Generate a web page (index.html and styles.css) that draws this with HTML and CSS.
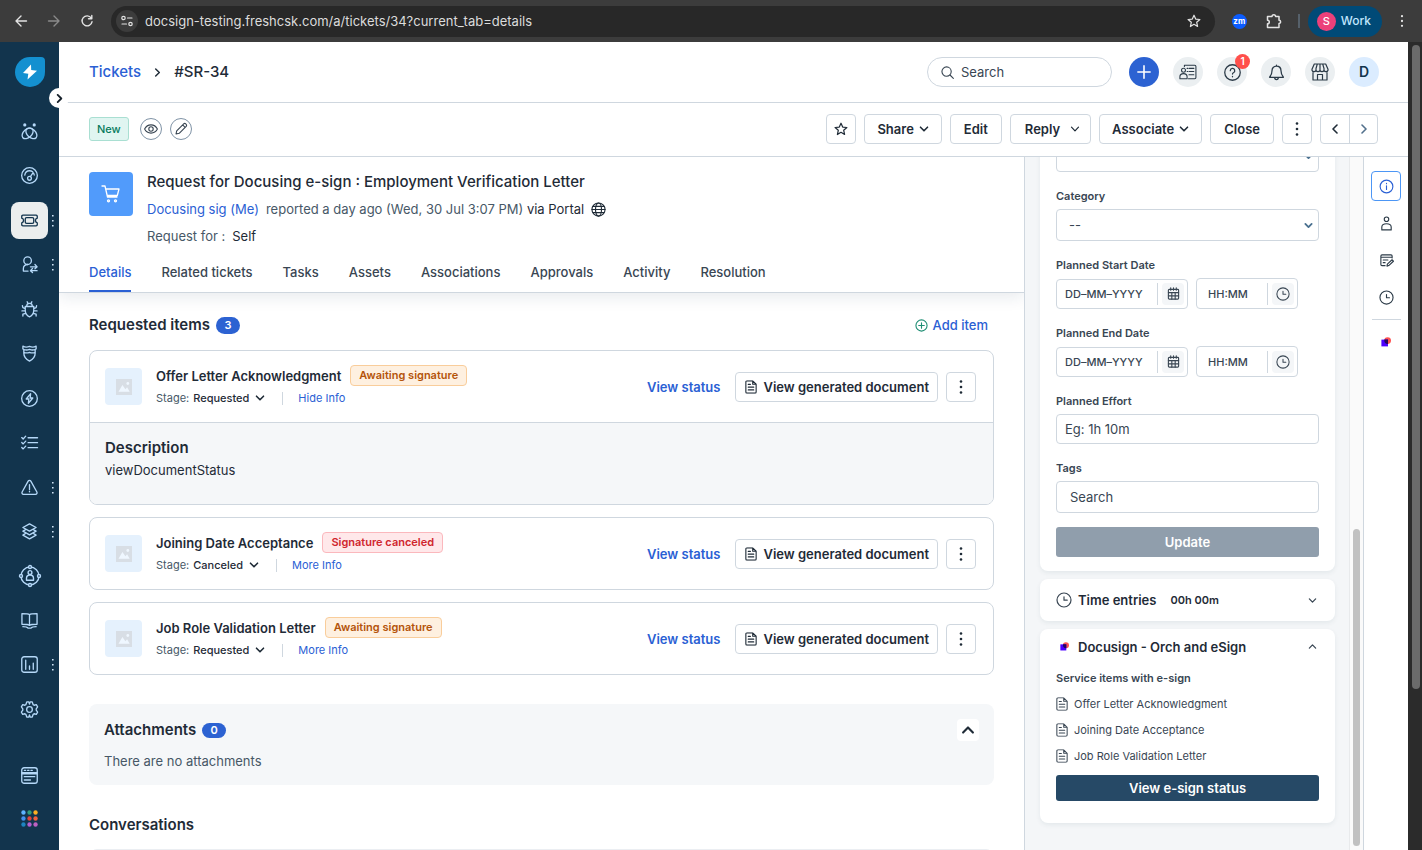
FILE: index.html
```html
<!DOCTYPE html>
<html lang="en">
<head>
<meta charset="utf-8">
<title>#SR-34 Request for Docusing e-sign</title>
<meta name="viewport" content="width=device-width, initial-scale=1">
<link rel="stylesheet" href="styles.css">
</head>
<body>
<svg class="sprite" aria-hidden="true">
  <symbol id="chev-down" viewBox="0 0 10 10"><path d="M1.500 3.200 5 6.800l3.500-3.600"/></symbol>
  <symbol id="chev-up" viewBox="0 0 10 10"><path d="M1.500 6.800 5 3.200l3.500 3.600"/></symbol>
  <symbol id="chev-right" viewBox="0 0 10 10"><path d="M3 1l4 4-4 4"/></symbol>
  <symbol id="chev-left" viewBox="0 0 10 10"><path d="M7 1 3 5l4 4"/></symbol>
  <symbol id="dots" viewBox="0 0 4 16"><g fill="currentColor" stroke="none"><circle cx="2" cy="2.500" r="1.300"/><circle cx="2" cy="8" r="1.300"/><circle cx="2" cy="13.500" r="1.300"/></g></symbol>
  <symbol id="nav-dots" viewBox="0 0 2 12"><path d="M0 0h1.600v1.600H0zM0 5h1.600v1.600H0zM0 10h1.600v1.600H0z" fill="currentColor" stroke="none"/></symbol>
  <symbol id="clock" viewBox="0 0 16 16"><circle cx="8" cy="8" r="7"/><path d="M8 4.800V8.200h3.200"/></symbol>
  <symbol id="calendar" viewBox="0 0 14 14"><rect x="1.500" y="2.500" width="11" height="10.500" rx="1"/><path d="M1.500 6h11M1.500 9.500h11M5.200 6v7M8.800 6v7M4 .8v2.600M7 .8v2.600M10 .8v2.600"/></symbol>
  <symbol id="doc" viewBox="0 0 14 16"><path d="M9 .8H2.500A1.500 1.500 0 0 0 1 2.300v11.400a1.500 1.500 0 0 0 1.500 1.500h9a1.500 1.500 0 0 0 1.500-1.500V4.800zM9 .8v4h4M3.800 5h2.500M3.800 8.200h6.400M3.800 11.400h6.400"/></symbol>
  <symbol id="picture" viewBox="0 0 16 16"><rect width="16" height="16" fill="#d8dee5"/><path d="M2.500 12.800 6.400 6l3 4.200 1.700-2 2.600 4.600z" fill="#eff7ff"/><circle cx="11.800" cy="4.500" r="1.400" fill="#eff7ff"/></symbol>
  <symbol id="docusign" viewBox="0 0 10 10"><circle cx="6.600" cy="3.600" r="3.400" fill="#ff5252"/><rect x=".4" y="2.600" width="6.600" height="6.800" fill="#4c00ff"/><path d="M3.400 2.600H7v4.380A3.400 3.400 0 0 1 3.400 2.600z" fill="#26065d"/></symbol>
</svg>

<header class="browser">
  <button class="b-btn" aria-label="Back"><svg viewBox="0 0 12 12"><path d="M11.500 6H1M6 1 1 6l5 5"/></svg></button>
  <button class="b-btn dim" aria-label="Forward"><svg viewBox="0 0 12 12"><path d="M.5 6H11M6 1l5 5-5 5"/></svg></button>
  <button class="b-btn" aria-label="Reload"><svg viewBox="0 0 12 12"><path d="M10.200 3A5 5 0 1 0 11 6.800M10.800.5v3.300H7.500"/></svg></button>
  <div class="omnibox">
    <button class="site-info" aria-label="Site information"><svg viewBox="0 0 12 12"><circle cx="2.500" cy="3" r="1.700"/><path d="M6.500 3H11M1 9h4.500"/><circle cx="9.500" cy="9" r="1.700"/></svg></button>
    <input class="url" aria-label="Address" value="docsign-testing.freshcsk.com/a/tickets/34?current_tab=details">
    <button class="b-btn" aria-label="Bookmark"><svg class="star" viewBox="0 0 14 14"><path d="m7 1.200 1.700 3.900 4.200.4-3.200 2.800.9 4.200L7 10.300l-3.600 2.200.9-4.200L1.100 5.500l4.200-.4z"/></svg></button>
  </div>
  <span class="zm">zm</span>
  <button class="b-btn ext" aria-label="Extensions"><svg viewBox="0 0 16 16"><path d="M1.500 3.500H6a1.800 1.800 0 0 1 3.600 0h3.400v3.700a1.600 1.600 0 0 1 0 3.200v4.100H1.500v-3.700a1.800 1.800 0 0 0 0-3.600z"/></svg></button>
  <span class="b-sep"></span>
  <button class="profile"><span class="avatar">S</span>Work</button>
  <button class="b-btn menu" aria-label="Menu"><svg viewBox="0 0 4 16"><use href="#dots"/></svg></button>
</header>

<div class="app">
  <aside class="sidebar">
    <a class="logo" href="#" aria-label="Home"><svg viewBox="0 0 16 16"><path d="M9 .5 1 9l5.300.7L5.500 15.500 15 6.700l-5.800-.8z"/></svg></a>
    <button class="expand" aria-label="Expand navigation"><svg viewBox="0 0 10 10"><use href="#chev-right"/></svg></button>
    <nav class="nav">
      <a href="#" aria-label="Freddy"><svg viewBox="0 0 18 18"><g fill="currentColor" stroke="none"><circle cx="4" cy="2" r="1.700"/><circle cx="14" cy="2" r="1.700"/></g><ellipse cx="7" cy="11" rx="6.800" ry="4.400" transform="rotate(-42 7 11)"/><ellipse cx="11" cy="11" rx="6.800" ry="4.400" transform="rotate(42 11 11)"/></svg></a>
      <a href="#" aria-label="Dashboard"><svg viewBox="0 0 18 18"><circle cx="9" cy="9" r="8.300"/><path d="M4 8.500C4.500 5.500 6.500 4 9 4c1.500 0 2.500.4 3.400 1M14 8.500c-.1-.8-.3-1.300-.6-1.800M10 10.300 12.800 6"/><circle cx="9" cy="12" r="2"/></svg></a>
      <a href="#" class="active" aria-label="Tickets"><svg viewBox="0 0 18 14"><path d="M.8 2.500c0-.8.500-1.200 1.200-1.200h14c.7 0 1.200.4 1.200 1.200v2a2.600 2.600 0 0 0 0 5v2c0 .8-.5 1.200-1.200 1.200H2c-.7 0-1.200-.4-1.200-1.200v-2a2.600 2.600 0 0 0 0-5z"/><rect x="4.500" y="4" width="9" height="6" rx="1.500"/></svg><svg class="more" viewBox="0 0 2 12"><use href="#nav-dots"/></svg></a>
      <a href="#" aria-label="Requesters"><svg viewBox="0 0 18 18"><circle cx="7" cy="5" r="4"/><path d="M7.500 16H2.500v-2.500C2.500 10.600 4.500 9 7 9M10 11.500h7M14.800 9l2.300 2.500-2.300 2M17 15.500h-7M12.200 13.200 10 15.500l2.200 2"/></svg><svg class="more" viewBox="0 0 2 12"><use href="#nav-dots"/></svg></a>
      <a href="#" aria-label="Problems"><svg viewBox="0 0 18 18"><path d="M6 5.500C6 3.500 7.200 2.500 9 2.500s3 1 3 3M4.500 5.800h9v4c0 3-1.500 5.500-4.500 7-3-1.500-4.500-4-4.500-7zM6.500.8l1 2M11.500.8l-1 2M4.500 8 2 7 1.500 5M4.500 10.500H1M5 13l-3 .8V16M13.500 8 16 7l.5-2M13.500 10.500H17M13 13l3 .8V16"/></svg></a>
      <a href="#" aria-label="Changes"><svg viewBox="0 0 18 18"><path d="M2 1.200c2 1.200 4.500 1.400 7 .3 2.500 1.100 5 .9 7-.3v3c-2 1.200-4.500 1.400-7 .4-2.500 1-5 .8-7-.4zM3 5v3.800c0 3.500 2.500 6.500 6 8.200 3.500-1.700 6-4.700 6-8.200V5M3 7.800c2 .8 4 .8 6 0 2 .8 4 .8 6 0"/></svg></a>
      <a href="#" aria-label="Releases"><svg viewBox="0 0 18 18"><circle cx="9" cy="9" r="8.300"/><path d="M10.200 4 5.500 9.500h2.800L7.800 14l4.700-5.500H9.700z"/></svg></a>
      <a href="#" aria-label="Tasks"><svg viewBox="0 0 18 16"><path d="M7.500 3H17.500M7.500 8.200h10M7.500 13.500h10M.8 2.800 2.300 4.300 5 1.300M.8 8l1.500 1.500L5 6.500M.8 13.300l1.500 1.500 2.700-3"/></svg></a>
      <a href="#" aria-label="Alerts"><svg viewBox="0 0 18 18"><path d="M7.600 2.200a1.600 1.600 0 0 1 2.800 0l6.400 11.600a1.600 1.600 0 0 1-1.400 2.400H2.600a1.600 1.600 0 0 1-1.400-2.400zM9 6v5M9 12.800v.8"/></svg><svg class="more" viewBox="0 0 2 12"><use href="#nav-dots"/></svg></a>
      <a href="#" aria-label="Assets"><svg viewBox="0 0 18 18"><path d="M9 1 16 4.800 9 8.600 2 4.800zM4.500 7.200 2 8.600l7 4 7-4-2.500-1.400M4.500 11.200 2 12.800l7 4 7-4-2.500-1.600"/></svg><svg class="more" viewBox="0 0 2 12"><use href="#nav-dots"/></svg></a>
      <a href="#" aria-label="On-call"><svg class="wide" viewBox="0 0 22 22"><circle cx="11" cy="11" r="9"/><circle cx="11" cy="7.500" r="1.900"/><path d="M7.500 15.200v-2c0-2 1.500-3.200 3.500-3.200s3.500 1.200 3.500 3.200v2z"/><g class="node"><circle cx="11" cy="2" r="1.500"/><circle cx="2" cy="11" r="1.500"/><circle cx="20" cy="11" r="1.500"/><circle cx="11" cy="20" r="1.500"/></g></svg></a>
      <a href="#" aria-label="Solutions"><svg viewBox="0 0 18 18"><path d="M9 2.800C8 2 6.500 1.800 1 1.800V13c5 0 7 .2 8 1.200 1-1 3-1.200 8-1.200V1.800c-5.500 0-7 .2-8 1zM9 2.800v11.400M2 15.500c3.500 0 4.500.2 5.500 1.500h3c1-1.300 2-1.500 5.500-1.500"/></svg></a>
      <a href="#" aria-label="Analytics"><svg viewBox="0 0 18 18"><rect x=".8" y=".8" width="16.400" height="16.400" rx="2.500"/><path d="M5 4.500v9.500M9 10.500V14M13 7.500V14"/></svg><svg class="more" viewBox="0 0 2 12"><use href="#nav-dots"/></svg></a>
      <a href="#" aria-label="Admin"><svg viewBox="0 0 18 18"><path d="M6.700 1h1.600L9 3.200 9.700 1h2.200l1 2.900 1 .6 2.300-.6 1.400 2.400-1.500 2v1.400l1.500 2-1.400 2.400-2.300-.6-1 .6-1 2.900H9.700L9 14.800 8.300 17H6.100l-1-2.900-1-.6-2.300.6L.4 11.700l1.500-2V8.300l-1.500-2 1.400-2.400 2.300.6 1-.6 1-2.900z"/><circle cx="9" cy="9" r="3"/></svg></a>
    </nav>
    <div class="nav-foot">
      <a href="#" aria-label="Workspace"><svg viewBox="0 0 18 18"><rect x=".8" y=".8" width="16.400" height="16.400" rx="2.500"/><path d="M1 6h16M1 7.200h16M3.500 3.500h1.500M7 3.500h1.500M10.500 3.500H12M3.500 10.200h11M3.500 13.800h6.500"/></svg></a>
      <a href="#" aria-label="Apps"><svg class="apps" viewBox="0 0 18 18"><circle cx="2.600" cy="2.600" r="2.300" fill="#5eb2ff"/><circle cx="9" cy="2.600" r="2.300" fill="#2f9c7c"/><circle cx="15.400" cy="2.600" r="2.300" fill="#fdb022"/><circle cx="2.600" cy="9" r="2.300" fill="#448fee"/><circle cx="9" cy="9" r="2.300" fill="#e0453c"/><circle cx="15.400" cy="9" r="2.300" fill="#f0603e"/><circle cx="2.600" cy="15.400" r="2.300" fill="#1e84c0"/><circle cx="9" cy="15.400" r="2.300" fill="#b35fd0"/><circle cx="15.400" cy="15.400" r="2.300" fill="#bd62c2"/></svg></a>
    </div>
  </aside>

  <div class="page">
    <header class="topbar">
      <div class="crumbs"><a href="#">Tickets</a><svg viewBox="0 0 10 10"><use href="#chev-right"/></svg><span>#SR-34</span></div>
      <div class="top-tools">
        <label class="search"><svg viewBox="0 0 14 14"><circle cx="6" cy="6" r="5"/><path d="m9.700 9.700 3.600 3.600"/></svg><input type="text" placeholder="Search" aria-label="Search"></label>
        <button class="round plus" aria-label="New"><svg viewBox="0 0 16 16"><path d="M8 1v14M1 8h14"/></svg></button>
        <button class="round" aria-label="Contacts"><svg class="lg" viewBox="0 0 20 18"><circle cx="5" cy="7" r="2.200"/><path d="M1 16.500v-2.300C1 11.900 2.600 10.800 5 10.800s4 1.100 4 3.400v2.300zM6 3V1.500h11.500c.8 0 1.300.5 1.300 1.300v12.400c0 .8-.5 1.300-1.300 1.300H10.500M9 5h1M11.500 5h5M9 8.500h1M11.500 8.500h5M11 12h5.500"/></svg></button>
        <button class="round" aria-label="Help"><svg viewBox="0 0 16 16"><circle cx="8" cy="8" r="7.300"/><path d="M5.900 6.300a2.100 2.100 0 1 1 3 1.900c-.6.300-.9.600-.9 1.300M8 11.600v.4"/></svg><span class="count">1</span></button>
        <button class="round" aria-label="Notifications"><svg viewBox="0 0 16 16"><path d="M8 1v1M8 2C5.200 2 3.800 4 3.800 6.200c0 3.300-.6 4.300-2.300 6.300h13c-1.700-2-2.300-3-2.300-6.300C12.200 4 10.800 2 8 2zM6.300 12.700c0 1.200.7 1.900 1.700 1.900s1.700-.7 1.700-1.900"/></svg></button>
        <button class="round" aria-label="Marketplace"><svg class="lg" viewBox="0 0 18 18"><path d="M3.300 1h11.400L17 6.200v1a2.100 2.100 0 0 1-4 0 2.100 2.100 0 0 1-4 0 2.100 2.100 0 0 1-4 0 2.100 2.100 0 0 1-4 0v-1zM5 7V5.500L6.300 1M9 7V1M13 7V5.500L11.700 1M2 9v8h14V9M6.500 17v-5.500h5V17"/></svg></button>
        <button class="round user">D</button>
      </div>
    </header>

    <div class="toolbar">
      <span class="status">New</span>
      <button class="ring" aria-label="Watch"><svg viewBox="0 0 14 14"><path d="M.6 7C2 4.300 4.200 2.900 7 2.900S12 4.300 13.400 7C12 9.700 9.800 11.100 7 11.100S2 9.700.6 7z"/><circle cx="7" cy="7" r="2.200"/></svg></button>
      <button class="ring" aria-label="Annotate"><svg viewBox="0 0 14 14"><path d="m2 12 .7-3.200 7-7a1.400 1.400 0 0 1 2 0l.5.500a1.400 1.400 0 0 1 0 2l-7 7zM8.700 2.900l2.400 2.400"/></svg></button>
      <div class="actions">
        <button class="btn sq" aria-label="Favourite"><svg class="i14" viewBox="0 0 14 14"><path d="m7 1.200 1.700 3.900 4.200.4-3.200 2.800.9 4.200L7 10.300l-3.600 2.200.9-4.200L1.100 5.500l4.200-.4z"/></svg></button>
        <button class="btn">Share<svg class="i10" viewBox="0 0 10 10"><use href="#chev-down"/></svg></button>
        <button class="btn mid">Edit</button>
        <button class="btn split">Reply<svg class="i10 thin" viewBox="0 0 10 10"><use href="#chev-down"/></svg></button>
        <button class="btn">Associate<svg class="i10" viewBox="0 0 10 10"><use href="#chev-down"/></svg></button>
        <button class="btn mid">Close</button>
        <button class="btn sq" aria-label="More"><svg class="v" viewBox="0 0 4 16"><use href="#dots"/></svg></button>
        <div class="pager"><button aria-label="Previous"><svg class="i10" viewBox="0 0 10 10"><use href="#chev-left"/></svg></button><button class="soft" aria-label="Next"><svg class="i10" viewBox="0 0 10 10"><use href="#chev-right"/></svg></button></div>
      </div>
    </div>

    <div class="body">
      <main class="main">
        <section class="ticket">
          <div class="cart"><svg viewBox="0 0 20 20"><path d="M1 2h3l2.500 11h9.500M4.700 5H18l-1.700 6.500H6.200"/><circle cx="7.500" cy="16.800" r="1"/><circle cx="14.500" cy="16.800" r="1"/></svg></div>
          <div class="ticket-text">
            <h1>Request for Docusing e-sign : Employment Verification Letter</h1>
            <p><a href="#">Docusing sig (Me)</a><span>reported a day ago (Wed, 30 Jul 3:07 PM) <b>via Portal</b></span><svg viewBox="0 0 16 16"><circle cx="8" cy="8" r="7"/><ellipse cx="8" cy="8" rx="3.200" ry="7"/><path d="M1 8h14M2 4.700h12M2 11.300h12"/></svg></p>
            <p><span>Request for :</span><b>Self</b></p>
          </div>
        </section>
        <nav class="tabs">
          <a class="on" href="#">Details</a><a href="#">Related tickets</a><a href="#">Tasks</a><a href="#">Assets</a><a href="#">Associations</a><a href="#">Approvals</a><a href="#">Activity</a><a href="#">Resolution</a>
        </nav>
        <div class="content">
          <div class="heading"><h2>Requested items</h2><span class="pill">3</span><a class="add" href="#"><svg viewBox="0 0 14 14"><circle cx="7" cy="7" r="6"/><path d="M7 4v6M4 7h6"/></svg>Add item</a></div>

          <div class="items">
            <article class="item">
              <div class="item-head">
                <div class="thumb"><svg viewBox="0 0 16 16"><use href="#picture"/></svg></div>
                <div class="item-text">
                  <div class="row"><h3>Offer Letter Acknowledgment</h3><span class="tag wait">Awaiting signature</span></div>
                  <div class="row sub"><span>Stage:</span><button>Requested<svg class="i10" viewBox="0 0 10 10"><use href="#chev-down"/></svg></button><a href="#">Hide Info</a></div>
                </div>
                <a class="view" href="#">View status</a>
                <button class="btn docbtn"><svg class="idoc" viewBox="0 0 14 16"><use href="#doc"/></svg>View generated document</button>
                <button class="btn sq" aria-label="More"><svg class="v" viewBox="0 0 4 16"><use href="#dots"/></svg></button>
              </div>
              <div class="item-info"><h2>Description</h2><p>viewDocumentStatus</p></div>
            </article>
            <article class="item">
              <div class="item-head">
                <div class="thumb"><svg viewBox="0 0 16 16"><use href="#picture"/></svg></div>
                <div class="item-text">
                  <div class="row"><h3>Joining Date Acceptance</h3><span class="tag stop">Signature canceled</span></div>
                  <div class="row sub"><span>Stage:</span><button>Canceled<svg class="i10" viewBox="0 0 10 10"><use href="#chev-down"/></svg></button><a href="#">More Info</a></div>
                </div>
                <a class="view" href="#">View status</a>
                <button class="btn docbtn"><svg class="idoc" viewBox="0 0 14 16"><use href="#doc"/></svg>View generated document</button>
                <button class="btn sq" aria-label="More"><svg class="v" viewBox="0 0 4 16"><use href="#dots"/></svg></button>
              </div>
            </article>
            <article class="item">
              <div class="item-head">
                <div class="thumb"><svg viewBox="0 0 16 16"><use href="#picture"/></svg></div>
                <div class="item-text">
                  <div class="row"><h3>Job Role Validation Letter</h3><span class="tag wait">Awaiting signature</span></div>
                  <div class="row sub"><span>Stage:</span><button>Requested<svg class="i10" viewBox="0 0 10 10"><use href="#chev-down"/></svg></button><a href="#">More Info</a></div>
                </div>
                <a class="view" href="#">View status</a>
                <button class="btn docbtn"><svg class="idoc" viewBox="0 0 14 16"><use href="#doc"/></svg>View generated document</button>
                <button class="btn sq" aria-label="More"><svg class="v" viewBox="0 0 4 16"><use href="#dots"/></svg></button>
              </div>
            </article>
          </div>

          <section class="attach">
            <div class="heading"><h2>Attachments</h2><span class="pill flat">0</span><button class="fold" aria-label="Collapse"><svg viewBox="0 0 10 10"><use href="#chev-up"/></svg></button></div>
            <p>There are no attachments</p>
          </section>

          <h2 class="conv">Conversations</h2>
          <div class="thread"></div>
        </div>
      </main>

      <aside class="props">
        <div class="props-scroll">
          <form class="card form">
            <div class="field"><span class="select"><select aria-label="Department"><option></option></select><svg viewBox="0 0 10 10"><use href="#chev-down"/></svg></span></div>
            <div class="field"><label for="category">Category</label><span class="select"><select id="category"><option>--</option></select><svg viewBox="0 0 10 10"><use href="#chev-down"/></svg></span></div>
            <div class="field"><label for="start">Planned Start Date</label>
              <div class="dates">
                <span class="combo date"><input id="start" placeholder="DD–MM–YYYY"><button type="button" aria-label="Pick date"><svg viewBox="0 0 14 14"><use href="#calendar"/></svg></button></span>
                <span class="combo time"><input placeholder="HH:MM" aria-label="Start time"><button type="button" aria-label="Pick time"><svg viewBox="0 0 16 16"><use href="#clock"/></svg></button></span>
              </div></div>
            <div class="field"><label for="end">Planned End Date</label>
              <div class="dates">
                <span class="combo date"><input id="end" placeholder="DD–MM–YYYY"><button type="button" aria-label="Pick date"><svg viewBox="0 0 14 14"><use href="#calendar"/></svg></button></span>
                <span class="combo time"><input placeholder="HH:MM" aria-label="End time"><button type="button" aria-label="Pick time"><svg viewBox="0 0 16 16"><use href="#clock"/></svg></button></span>
              </div></div>
            <div class="field"><label for="effort">Planned Effort</label><input class="text" id="effort" placeholder="Eg: 1h 10m"></div>
            <div class="field last"><label for="tags">Tags</label><input class="text tags" id="tags" placeholder="Search"></div>
            <button class="update" type="button">Update</button>
          </form>
          <section class="card widget">
            <div class="widget-head"><svg class="i16" viewBox="0 0 16 16"><use href="#clock"/></svg><h2>Time entries</h2><span>00h 00m</span><svg class="end" viewBox="0 0 10 10"><use href="#chev-down"/></svg></div>
          </section>
          <section class="card widget">
            <div class="widget-head open"><span class="brand"><svg viewBox="0 0 10 10"><use href="#docusign"/></svg></span><h2>Docusign - Orch and eSign</h2><svg class="end" viewBox="0 0 10 10"><use href="#chev-up"/></svg></div>
            <div class="esign">
              <h4>Service items with e-sign</h4>
              <ul>
                <li><svg viewBox="0 0 14 16"><use href="#doc"/></svg>Offer Letter Acknowledgment</li>
                <li><svg viewBox="0 0 14 16"><use href="#doc"/></svg>Joining Date Acceptance</li>
                <li><svg viewBox="0 0 14 16"><use href="#doc"/></svg>Job Role Validation Letter</li>
              </ul>
              <button class="primary">View e-sign status</button>
            </div>
          </section>
        </div>
        <div class="track"><div class="thumb-bar"></div></div>
      </aside>

      <nav class="rail">
        <button class="on" aria-label="Details"><svg viewBox="0 0 16 16"><circle cx="8" cy="8" r="6.800"/><path d="M8 7.200v4M8 4.600v.4"/></svg></button>
        <button aria-label="Requester"><svg viewBox="0 0 16 16"><circle cx="8" cy="3.400" r="2.400"/><path d="M3 14.800v-3c0-2.300 1.800-3.500 5-3.500s5 1.200 5 3.500v3z"/></svg></button>
        <button aria-label="To-do"><svg viewBox="0 0 16 16"><path d="M6.500 13.500H3.200c-.8 0-1.200-.5-1.200-1.200V3.200C2 2.500 2.500 2 3.200 2h9.600c.7 0 1.200.5 1.200 1.200v2M2 4.500h12M4.500 7.500h5M4.500 10.300h2M8.500 14l.4-2.200 5-4.600 1.500 1.600-5 4.600z"/></svg></button>
        <button aria-label="Activity"><svg viewBox="0 0 16 16"><use href="#clock"/></svg></button>
        <hr>
        <button aria-label="Docusign"><svg class="ds" viewBox="0 0 10 10"><use href="#docusign"/></svg></button>
      </nav>
    </div>
  </div>
  <div class="window-scroll"><div></div></div>
</div>
</body>
</html>
```

FILE: styles.css
```css
:root {
  --ink: #1f2b37;
  --text: #394653;
  --muted: #475867;
  --link: #2a60d4;
  --line: #cfd7df;
  --navy: #12344d;
}

* { box-sizing: border-box; }

body {
  margin: 0;
  height: 100vh;
  display: flex;
  flex-direction: column;
  overflow: hidden;
  background: #fff;
  color: var(--text);
  font: 13px/20px Inter, "Liberation Sans", sans-serif;
}

h1, h2, h3, h4, p, ul { margin: 0; padding: 0; }
ul { list-style: none; }
a { color: var(--link); text-decoration: none; }
button, input, select { font: inherit; color: inherit; margin: 0; }
button { padding: 0; border: 0; background: none; }
input { min-width: 0; border: 0; background: none; outline: 0; padding: 0; }
input::placeholder { color: var(--text); opacity: 1; }
h1, h2 { font-size: 15px; font-weight: 600; color: var(--ink); }
h1 { font-weight: 500; }

svg {
  flex: none;
  display: block;
  fill: none;
  stroke: currentColor;
  stroke-width: 1.2;
  stroke-linecap: round;
  stroke-linejoin: round;
  overflow: visible;
}
.sprite { position: absolute; width: 0; height: 0; }
.i10 { width: 10px; height: 10px; stroke-width: 1.6; }
.i14 { width: 14px; height: 14px; }
.i16 { width: 16px; height: 16px; }
.v { width: 4px; height: 16px; }
.idoc { width: 12px; height: 14px; stroke-width: 1.3; }

/* Browser bar */
.browser {
  flex: none;
  display: flex;
  align-items: center;
  height: 42px;
  padding: 0 18px 0 14px;
  background: #3c3c3c;
  color: #e3e3e3;
}
.b-btn { width: 13px; height: 30px; display: grid; place-items: center; margin-right: 20px; }
.b-btn svg { width: 12px; height: 12px; stroke-width: 1.4; }
.b-btn.dim { color: #8a8a8a; }
.omnibox {
  flex: 1;
  display: flex;
  align-items: center;
  height: 31px;
  margin-left: -2px;
  padding: 0 0 0 5px;
  border-radius: 16px;
  background: #282828;
}
.omnibox .b-btn { margin-right: 15px; }
.omnibox .star { width: 14px; height: 14px; stroke-width: 1.2; }
.site-info { width: 22px; height: 22px; border-radius: 50%; background: #3c3c3c; display: grid; place-items: center; }
.site-info svg { width: 12px; height: 12px; }
.url { flex: 1; margin-left: 7px; font-size: 13px; color: #dcdcdc; }
.zm {
  width: 15px; height: 15px; margin: 0 19px 0 17px;
  border-radius: 50%;
  background: #0b5cff; color: #fff;
  font-size: 8px; line-height: 14px; font-weight: 700; text-align: center;
}
.ext { margin-right: 17px; width: 15px; }
.ext svg { width: 16px; height: 16px; stroke-width: 1.5; }
.b-sep { width: 2px; height: 14px; background: #56616b; margin-right: 8px; }
.profile {
  display: flex; align-items: center; gap: 5px;
  height: 31px; padding: 0 11px 0 9px;
  border-radius: 16px;
  background: #004a77; color: #c2e7ff;
  font-size: 12px;
  font-weight: 500;
}
.avatar { width: 19px; height: 19px; border-radius: 50%; background: #ec407a; color: #fff; font-size: 11px; line-height: 19px; }
.menu { margin: 0 0 0 18px; width: 4px; }
.menu svg { width: 4px; height: 14px; }

/* App shell */
.app { flex: 1; min-height: 0; display: flex; }
.page { flex: 1; min-width: 0; display: flex; flex-direction: column; }
.body { flex: 1; min-height: 0; display: flex; }
.window-scroll { flex: none; width: 14px; padding: 3px 2px 0 4px; background: #2b2b2b; }
.window-scroll div { height: 80%; border-radius: 4px; background: #6b6b6b; }

/* Sidebar */
.sidebar {
  position: relative;
  flex: none;
  display: flex;
  flex-direction: column;
  align-items: center;
  width: 59px;
  padding: 15px 0 13px;
  background: var(--navy);
}
.logo { width: 30px; height: 30px; display: grid; place-items: center; border-radius: 50% 4px 50% 50%; background: #1490d0; }
.logo svg { width: 16px; height: 16px; fill: #fff; stroke: none; }
.expand {
  position: absolute; top: 46px; right: -10px; z-index: 2;
  width: 20px; height: 20px; border-radius: 50%;
  display: grid; place-items: center;
  background: #fff; color: #16202a;
}
.expand svg { width: 9px; height: 9px; stroke-width: 2; }
.nav { flex: 1; display: flex; flex-direction: column; justify-content: space-between; margin: 26px 0 29px; }
.nav a, .nav-foot a { position: relative; width: 37px; height: 37px; display: grid; place-items: center; color: #b5d8f8; border-radius: 8px; }
.nav-foot { display: flex; flex-direction: column; gap: 6px; }
.nav svg, .nav-foot svg { width: 17px; height: 17px; stroke-width: 1.4; }
.nav a.active { background: #ebeeee; color: var(--navy); }
.nav .wide { width: 22px; height: 22px; }
.node { fill: var(--navy); }
.nav-foot .apps { stroke: none; }
.nav .more { position: absolute; right: -6px; top: 13px; width: 2px; height: 12px; color: #cfe3f5; }

/* Top bar */
.topbar { flex: none; display: flex; align-items: center; justify-content: space-between; height: 61px; padding: 0 29px 0 30px; border-bottom: 1px solid var(--line); }
.crumbs { display: flex; align-items: center; gap: 12px; font-size: 15px; font-weight: 500; color: var(--ink); }
.crumbs svg { width: 9px; height: 9px; stroke-width: 1.6; }
.top-tools { display: flex; align-items: center; gap: 14px; }
.search { display: flex; align-items: center; gap: 7px; width: 185px; height: 30px; margin-right: 3px; padding: 0 13px; border: 1px solid var(--line); border-radius: 15px; }
.search svg { width: 13px; height: 13px; }
.round { position: relative; width: 30px; height: 30px; display: grid; place-items: center; border-radius: 50%; background: #ebeff1; color: #2b3a47; }
.round svg { width: 17px; height: 17px; }
.round .lg { width: 18px; height: 18px; }
.round.plus { background: #2c62d2; color: #fff; }
.round.plus svg { width: 14px; height: 14px; stroke-width: 1.8; }
.round.user { background: #dbecff; color: var(--navy); font-size: 14px; font-weight: 600; }
.count { position: absolute; top: -3px; right: -3px; width: 15px; height: 15px; border-radius: 50%; background: #ff4f4b; color: #fff; font-size: 10px; line-height: 15px; font-weight: 600; }

/* Ticket toolbar */
.toolbar { flex: none; display: flex; align-items: center; height: 54px; padding: 0 30px 2px; border-bottom: 1px solid var(--line); }
.status { height: 24px; padding: 0 7px; border: 1px solid #a9dfd2; border-radius: 3px; background: #e0f5f1; color: #067a5c; font-size: 11px; line-height: 22px; font-weight: 500; }
.ring { width: 22px; height: 22px; margin-left: 8px; display: grid; place-items: center; border: 1px solid #7f93a6; border-radius: 50%; }
.status + .ring { margin-left: 11px; }
.ring svg { width: 14px; height: 14px; stroke-width: 1.1; }
.actions { display: flex; gap: 8px; margin-left: auto; }
.btn {
  flex: none;
  display: flex; align-items: center; justify-content: center; gap: 5px;
  height: 30px; padding: 0 12px;
  border: 1px solid var(--line); border-radius: 4px;
  background: #fff; color: var(--ink);
  font-weight: 600;
}
.btn.sq { width: 30px; padding: 0; }
.btn.mid { padding: 0 13px; }
.btn.split { gap: 10px; padding: 0 10px 0 14px; }
.thin { stroke-width: 1.2; }
.pager { display: flex; border: 1px solid var(--line); border-radius: 4px; }
.pager button { width: 28px; height: 28px; display: grid; place-items: center; color: var(--ink); }
.pager .soft { border-left: 1px solid var(--line); color: #52708c; }

/* Main column */
.main { flex: 1; min-width: 0; overflow: hidden; }
.ticket { display: flex; gap: 14px; padding: 15px 30px 0; }
.cart { flex: none; width: 44px; height: 44px; display: grid; place-items: center; border-radius: 4px; background: #519bfb; color: #fff; }
.cart svg { width: 20px; height: 20px; stroke-width: 1.3; }
.ticket-text { display: grid; gap: 7px; }
.ticket-text p { display: flex; align-items: center; gap: 7px; color: var(--muted); }
.ticket-text b { font-weight: 400; color: var(--ink); }
.ticket-text svg { width: 15px; height: 15px; color: var(--ink); }
.tabs { display: flex; gap: 30px; margin-top: 7px; padding: 0 30px; border-bottom: 1px solid var(--line); box-shadow: 0 4px 16px rgba(18, 52, 77, .1); clip-path: inset(0 0 -24px 0); }
.tabs a { padding: 9px 0 8px; color: var(--text); font-weight: 500; border-bottom: 2px solid transparent; }
.tabs a.on { color: var(--link); border-color: var(--link); }
.content { padding: 22px 30px 0; }
.heading { display: flex; align-items: center; gap: 6px; }
.pill { min-width: 24px; height: 17px; border-radius: 9px; background: #2c62d2; color: #fff; font-size: 11px; line-height: 17px; font-weight: 600; text-align: center; }
.pill.flat { height: 15px; line-height: 15px; }
.add { display: flex; align-items: center; gap: 5px; margin: 0 6px 0 auto; font-weight: 500; }
.add svg { width: 13px; height: 13px; color: #1f8e74; }

.items { display: grid; gap: 12px; margin-top: 15px; }
.item { border: 1px solid var(--line); border-radius: 8px; overflow: hidden; }
.item-head { display: flex; align-items: center; height: 71px; padding: 0 17px 0 15px; }
.thumb { flex: none; width: 37px; height: 37px; display: grid; place-items: center; border-radius: 4px; background: #e5f1fd; }
.thumb svg { width: 16px; height: 16px; stroke: none; }
.item-text { flex: 1; min-width: 0; margin-left: 14px; display: grid; gap: 2px; }
.row { display: flex; align-items: center; gap: 9px; }
.row h3 { font-size: 13px; font-weight: 600; color: var(--ink); }
.tag { height: 21px; padding: 0 8px; border: 1px solid; border-radius: 4px; font-size: 11px; line-height: 19px; font-weight: 600; }
.tag.wait { color: #b4540a; background: #fef0e0; border-color: #f9cd9b; }
.tag.stop { color: #d0262e; background: #ffe8ea; border-color: #fbb8bd; }
.row.sub { gap: 4px; font-size: 11px; color: var(--muted); }
.row.sub button { display: flex; align-items: center; gap: 6px; padding-right: 17px; height: 13px; border-right: 1px solid var(--line); color: var(--ink); font-weight: 500; }
.row.sub a { margin-left: 11px; }
.view { font-weight: 600; margin-right: 15px; }
.docbtn { gap: 6px; padding: 0 8px 0 9px; margin-right: 8px; }
.item-info { height: 82px; padding: 15px; border-top: 1px solid var(--line); background: #f5f7f9; }
.item-info p { margin-top: 2px; color: var(--ink); }

.attach { margin-top: 29px; padding: 15px; height: 81px; border-radius: 8px; background: #f5f7f9; }
.attach .heading { height: 22px; }
.attach p { margin-top: 10px; color: var(--muted); }
.fold { width: 22px; height: 22px; margin-left: auto; display: grid; place-items: center; border-radius: 4px; background: #fff; color: var(--ink); }
.fold svg { width: 14px; height: 14px; stroke-width: 1.5; }
.conv { margin-top: 30px; }
.thread { margin-top: 14px; height: 60px; border: 1px solid #ebeef2; border-radius: 8px; }

/* Properties */
.props { flex: none; width: 340px; display: flex; border-left: 1px solid var(--line); border-right: 1px solid var(--line); background: #f4f6f8; }
.props-scroll { flex: 1; display: flex; flex-direction: column; justify-content: flex-end; gap: 8px; padding: 0 14px 27px 15px; overflow: hidden; }
.card { flex: none; border-radius: 8px; background: #fff; box-shadow: 0 2px 5px rgba(18, 52, 77, .07); }
.form { padding: 16px 16px 14px; }
.field { margin-bottom: 16px; }
.field.last { margin-bottom: 14px; }
.field label { display: block; margin-bottom: 5px; font-size: 11px; line-height: 16px; font-weight: 600; }
.select { position: relative; display: block; }
.select select { appearance: none; display: block; width: 100%; height: 32px; padding: 0 12px; border: 1px solid var(--line); border-radius: 4px; background: #fff; }
.select svg { position: absolute; right: 6px; top: 12px; width: 9px; height: 9px; color: #49708f; stroke-width: 2; }
.dates { display: flex; align-items: center; gap: 8px; }
.combo { display: flex; align-items: center; height: 30px; padding-right: 3px; border: 1px solid var(--line); border-radius: 4px; font-size: 11px; font-weight: 500; }
.combo input { flex: 1; height: 22px; border-right: 1px solid var(--line); }
.combo button { width: 22px; height: 22px; margin-left: 4px; display: grid; place-items: center; border-radius: 4px; background: #f4f6f8; }
.combo svg { width: 13px; height: 13px; }
.combo.date { width: 132px; padding-left: 8px; }
.combo.time { width: 102px; height: 31px; padding-left: 11px; }
.combo.time svg { width: 14px; height: 14px; }
.text { display: block; width: 100%; height: 30px; padding: 0 8px; border: 1px solid var(--line); border-radius: 4px; }
.text.tags { height: 32px; padding: 0 13px; }
.update { display: block; width: 100%; height: 30px; border-radius: 3px; background: #909eac; color: #fff; font-weight: 600; }
.widget { padding: 0 16px; }
.widget-head { display: flex; align-items: center; gap: 6px; height: 42px; }
.widget-head.open { height: 35px; }
.widget-head h2 { font-size: 13px; }
.widget-head span { margin-left: 8px; font-size: 11px; font-weight: 600; color: var(--ink); }
.widget-head .brand { width: 16px; margin: 0; display: grid; place-items: center; }
.brand svg { width: 9px; height: 9px; stroke: none; }
.end { width: 9px; height: 9px; margin: 0 2px 0 auto; stroke-width: 1.4; }
.esign { padding: 4px 0 22px; }
.esign h4 { font-size: 11px; line-height: 20px; font-weight: 600; }
.esign ul { margin-top: 3px; }
.esign li { display: flex; align-items: center; gap: 6px; height: 26px; font-size: 11px; }
.esign li svg { width: 12px; height: 14px; }
.primary { display: block; width: 100%; height: 26px; margin-top: 6px; border-radius: 3px; background: #264966; color: #fff; font-weight: 600; }
.track { flex: none; width: 14px; padding: 0 3px 4px; display: flex; align-items: flex-end; border-left: 1px solid #e8eaec; background: #fafafa; }
.thumb-bar { width: 8px; height: 46%; border-radius: 4px; background: #c1c1c1; }

/* Icon rail */
.rail { flex: none; width: 44px; display: flex; flex-direction: column; align-items: center; gap: 7px; padding-top: 14px; }
.rail button { width: 30px; height: 30px; display: grid; place-items: center; border: 1px solid transparent; border-radius: 4px; color: #2b3a47; }
.rail .on { border-color: #4c96f5; color: var(--link); }
.rail svg { width: 15px; height: 15px; }
.rail hr { width: 29px; height: 1px; margin: 0; border: 0; background: var(--line); }
.rail .ds { width: 10px; height: 10px; stroke: none; }
```
